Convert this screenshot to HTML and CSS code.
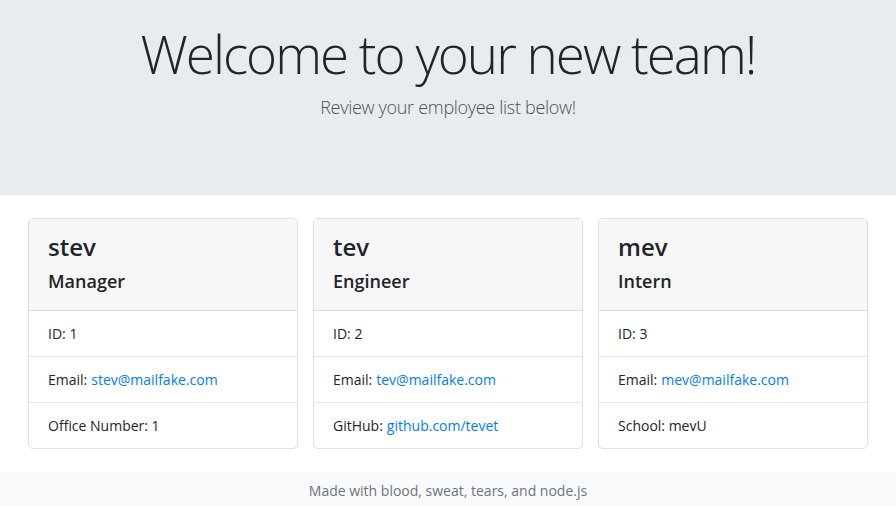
FILE: index.html
```html
<!DOCTYPE html>
<html lang="en">
<head>
<meta charset="utf-8">
<title>My Team</title>
<link rel="stylesheet" href="styles.css">
</head>
<body>
<header class="jumbotron">
  <h1 class="display">Welcome to your new team!</h1>
  <p class="lead">Review your employee list below!</p>
</header>
<main class="team">
  <div class="card">
    <div class="card-header">
      <h2 class="name">stev</h2>
      <h3 class="role">Manager</h3>
    </div>
    <ul class="list">
      <li class="item">ID: 1</li>
      <li class="item">Email: <a href="#">stev@mailfake.com</a></li>
      <li class="item">Office Number: 1</li>
    </ul>
  </div>
  <div class="card">
    <div class="card-header">
      <h2 class="name">tev</h2>
      <h3 class="role">Engineer</h3>
    </div>
    <ul class="list">
      <li class="item">ID: 2</li>
      <li class="item">Email: <a href="#">tev@mailfake.com</a></li>
      <li class="item">GitHub: <a href="#">github.com/tevet</a></li>
    </ul>
  </div>
  <div class="card">
    <div class="card-header">
      <h2 class="name">mev</h2>
      <h3 class="role">Intern</h3>
    </div>
    <ul class="list">
      <li class="item">ID: 3</li>
      <li class="item">Email: <a href="#">mev@mailfake.com</a></li>
      <li class="item">School: mevU</li>
    </ul>
  </div>
</main>
<footer class="footer">Made with blood, sweat, tears, and node.js</footer>
</body>
</html>
```
FILE: styles.css
```css
* { box-sizing: border-box; }
html, body { margin: 0; padding: 0; }
body {
  font-family: "Open Sans", "Noto Sans", sans-serif;
  color: #212529;
  background: #fff;
  font-size: 15px;
}
.jumbotron {
  background: #e9ecef;
  height: 195px;
  padding-top: 22px;
  text-align: center;
}
.display {
  margin: 0;
  font-size: 53px;
  font-weight: 300;
  line-height: 1.2;
  letter-spacing: -2px;
  color: #212529;
}
.lead {
  margin: 9px 0 0;
  font-size: 18px;
  font-weight: 300;
  letter-spacing: -0.3px;
  color: #495057;
}
.team {
  display: flex;
  gap: 15px;
  padding: 0 28px;
  margin-top: 23px;
}
.card {
  flex: 1;
  border: 1px solid rgba(0,0,0,.125);
  border-radius: 5px;
  overflow: hidden;
}
.card-header {
  background: #f7f7f7;
  height: 92px;
  padding: 11px 19px 0;
  border-bottom: 1px solid rgba(0,0,0,.1);
}
.name {
  margin: 0;
  font-size: 24px;
  font-weight: 600;
  line-height: 34px;
}
.role {
  margin: 0;
  font-size: 18px;
  font-weight: 600;
  line-height: 34px;
}
.list { list-style: none; margin: 0; padding: 0; }
.item {
  height: 46px;
  padding: 0 19px;
  display: flex;
  align-items: center;
  border-top: 1px solid rgba(0,0,0,.1);
  font-size: 14px;
}
.item:first-child { border-top: 0; height: 45px; }
.item a { color: #007bff; text-decoration: none; margin-left: 4px; }
.footer {
  margin-top: 23px;
  background: #f8f9fa;
  height: 40px;
  padding-top: 9px;
  text-align: center;
  color: #6c757d;
  font-size: 14px;
}
```
